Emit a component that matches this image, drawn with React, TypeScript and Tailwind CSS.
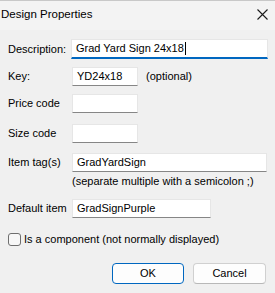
const FONT = "font-['Liberation_Sans',Arial,sans-serif]";

function Field({ width, value, focused }: { width: string; value?: string; focused?: boolean }) {
  return (
    <div
      className={`${width} flex items-center bg-white border border-[#e6e6e6] pl-[4px] ${
        focused ? 'h-[20px] border-b-2 border-b-[#0067c0]' : 'h-[19px] border-b-[#868686]'
      }`}
    >
      <span className="whitespace-nowrap">{value}</span>
      {focused && <span className="w-px h-[13px] bg-black ml-px" />}
    </div>
  );
}

function Row({ label, className, children }: { label: string; className: string; children: React.ReactNode }) {
  return (
    <div className={`flex items-center ${className}`}>
      <div className="w-[64px] shrink-0">{label}</div>
      {children}
    </div>
  );
}

export default function App() {
  return (
    <div className={`w-[275px] h-[293px] bg-[#f0f0f0] text-black text-[11px] ${FONT} border-t border-[#c8c8c8] flex flex-col overflow-hidden`}>
      {/* Title bar */}
      <div className="h-[29px] flex items-center justify-between pl-[1px] pr-[7px] bg-[#f3f3f3]">
        <span className="text-[11.5px] mt-[-2px]">Design Properties</span>
        <svg width="11" height="11" viewBox="0 0 11 11" className="mb-[3px]">
          <path d="M0.5 0.5 L10.5 10.5 M10.5 0.5 L0.5 10.5" stroke="#1a1a1a" strokeWidth="1.1" fill="none" />
        </svg>
      </div>

      <div className="flex flex-col pl-[8px]">
        <Row label="Description:" className="mt-[9px]">
          <div className="ml-[-1px]">
            <Field width="w-[197px]" value="Grad Yard Sign 24x18" focused />
          </div>
        </Row>

        <Row label="Key:" className="mt-[8px]">
          <Field width="w-[66px]" value="YD24x18" />
          <span className="ml-[8px]">(optional)</span>
        </Row>

        <Row label="Price code" className="mt-[8px]">
          <Field width="w-[66px]" />
        </Row>

        <Row label="Size code" className="mt-[11px]">
          <Field width="w-[66px]" />
        </Row>

        <Row label="Item tag(s)" className="mt-[10px]">
          <Field width="w-[195px]" value="GradYardSign" />
        </Row>

        <div className="ml-[64px] mt-[2px] h-[14px] leading-[14px]">(separate multiple with a semicolon ;)</div>

        <Row label="Default item" className="mt-[11px]">
          <Field width="w-[139px]" value="GradSignPurple" />
        </Row>

        <label className="flex items-center mt-[15px] h-[13px]">
          <span className="w-[13px] h-[13px] rounded-[3px] border border-[#6e6e6e] bg-[#f7f7f7]" />
          <span className="ml-[3px]">Is a component (not normally displayed)</span>
        </label>
      </div>

      <div className="flex justify-end gap-[9px] pr-[9px] mt-[17px]">
        <button className="w-[72px] h-[21px] rounded-[4px] border border-[#0067c0] bg-[#fdfdfd] text-[11px]">OK</button>
        <button className="w-[73px] h-[21px] rounded-[4px] border border-[#d0d0d0] border-b-[#b8b8b8] bg-[#fdfdfd] text-[11px]">Cancel</button>
      </div>
    </div>
  );
}
